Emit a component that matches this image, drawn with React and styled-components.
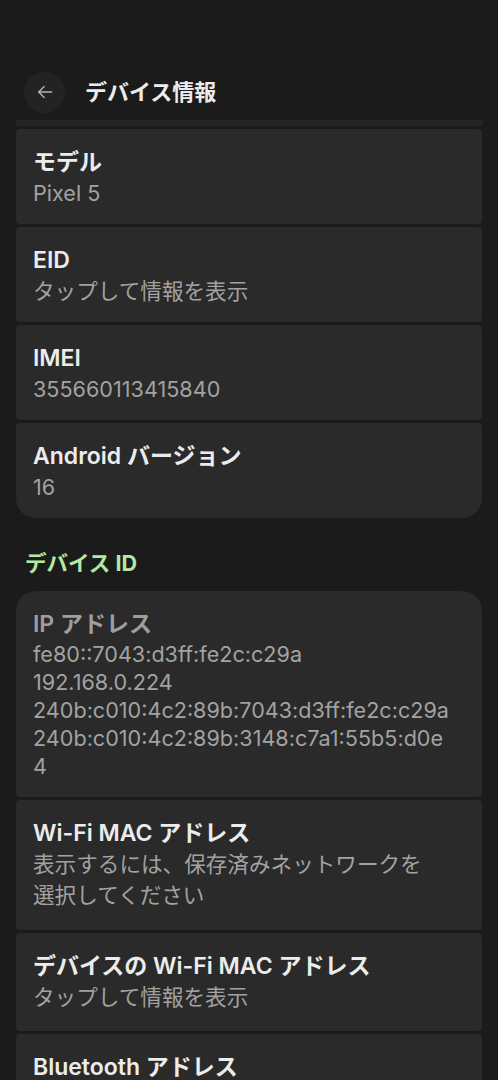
import React from 'react';
import styled, { createGlobalStyle } from 'styled-components';

const GlobalStyle = createGlobalStyle`
  html, body {
    margin: 0;
    padding: 0;
    background: #1b1b1b;
  }
  body {
    font-family: Inter, "Noto Sans CJK JP", sans-serif;
    -webkit-font-smoothing: antialiased;
  }
`;

const Screen = styled.div`
  width: 498px;
  height: 1080px;
  overflow: hidden;
  background: #1b1b1b;
  padding-top: 72px;
  box-sizing: border-box;
`;

const TopBar = styled.header`
  display: flex;
  align-items: center;
  gap: 20px;
  height: 40px;
  padding-left: 24px;
`;

const BackButton = styled.button`
  width: 41px;
  height: 41px;
  border-radius: 50%;
  border: none;
  background: #232323;
  display: flex;
  align-items: center;
  justify-content: center;
  padding: 0;
  color: #b4b4b4;
`;

const PageTitle = styled.h1`
  margin: 0;
  font-size: 22px;
  font-weight: 700;
  color: #ececec;
  line-height: 32px;
`;

const List = styled.div`
  display: flex;
  flex-direction: column;
  gap: 3px;
  margin: 0 16px;
`;

const Peek = styled.div`
  height: 6px;
  margin-top: 8px;
  background: #252525;
`;

const Card = styled.div`
  background: #2a2a2a;
  border-radius: ${p => (p.$first ? '20px 20px 4px 4px' : p.$last ? '4px 4px 20px 20px' : '4px')};
  padding: ${p => p.$pad || '17px 17px 15px'};
`;

const Title = styled.div`
  font-size: 23px;
  font-weight: 600;
  line-height: 32px;
  color: ${p => (p.$muted ? '#9e9e9e' : '#ececec')};
`;

const Sub = styled.div`
  font-size: 21.6px;
  line-height: ${p => p.$lh || '31px'};
  color: #a2a2a2;
`;

const SectionLabel = styled.h2`
  margin: 30px 0 13px 25px;
  font-size: 21.5px;
  font-weight: 700;
  line-height: 30px;
  color: #b5e8a0;
`;

const BackArrow = () => (
  <svg width="20" height="20" viewBox="0 0 24 24" fill="none" stroke="currentColor" strokeWidth="1.6" strokeLinecap="round" strokeLinejoin="round">
    <path d="M20 12H4.5" />
    <path d="M11 5.5L4.5 12l6.5 6.5" />
  </svg>
);

const info = [
  { title: 'モデル', sub: ['Pixel 5'] },
  { title: 'EID', sub: ['タップして情報を表示'] },
  { title: 'IMEI', sub: ['355660113415840'] },
  { title: 'Android バージョン', sub: ['16'] },
];

const ids = [
  {
    title: 'IP アドレス',
    muted: true,
    lh: '28px',
    pad: '17px 17px 17px',
    sub: [
      'fe80::7043:d3ff:fe2c:c29a',
      '192.168.0.224',
      '240b:c010:4c2:89b:7043:d3ff:fe2c:c29a',
      '240b:c010:4c2:89b:3148:c7a1:55b5:d0e',
      '4',
    ],
  },
  { title: 'Wi-Fi MAC アドレス', pad: '17px 17px 19px', sub: ['表示するには、保存済みネットワークを', '選択してください'] },
  { title: 'デバイスの Wi-Fi MAC アドレス', pad: '17px 17px 18px', sub: ['タップして情報を表示'] },
  { title: 'Bluetooth アドレス', sub: ['タップして情報を表示'] },
];

const renderCards = (items, first) =>
  items.map((item, i) => (
    <Card
      key={item.title}
      $first={first && i === 0}
      $last={!first && i === items.length - 1}
      $pad={item.pad}
    >
      <Title $muted={item.muted}>{item.title}</Title>
      {item.sub.map(line => (
        <Sub key={line} $lh={item.lh}>{line}</Sub>
      ))}
    </Card>
  ));

export default function App() {
  return (
    <>
      <GlobalStyle />
      <Screen>
        <TopBar>
          <BackButton aria-label="戻る">
            <BackArrow />
          </BackButton>
          <PageTitle>デバイス情報</PageTitle>
        </TopBar>

        <List>
          <Peek />
          {info.map((item, i) => (
            <Card key={item.title} $last={i === info.length - 1}>
              <Title>{item.title}</Title>
              {item.sub.map(line => (
                <Sub key={line}>{line}</Sub>
              ))}
            </Card>
          ))}
        </List>

        <SectionLabel>デバイス ID</SectionLabel>

        <List>{renderCards(ids, true)}</List>
      </Screen>
    </>
  );
}
